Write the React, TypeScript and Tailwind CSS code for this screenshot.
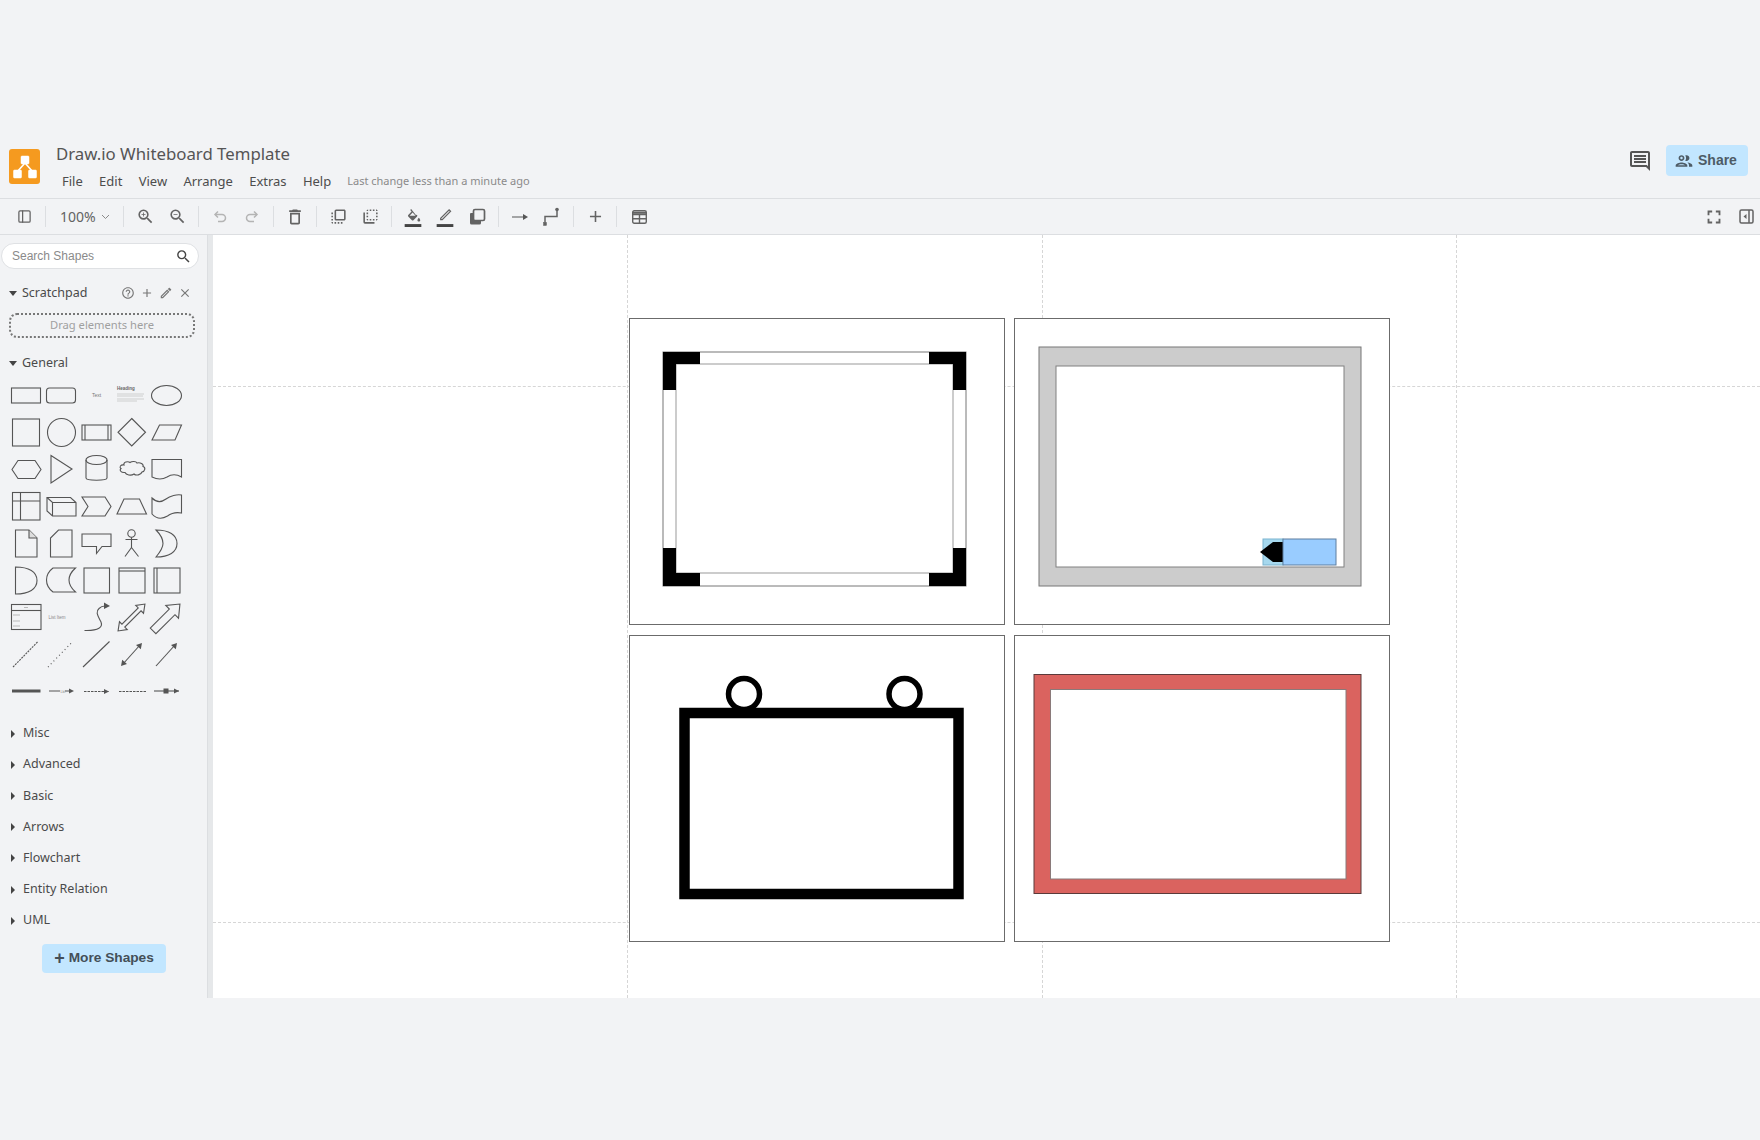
import type { ReactNode } from 'react';
import { PanelLeft } from 'lucide-react';
import {
  MdAdd,
  MdClose,
  MdFullscreen,
  MdHelpOutline,
  MdOutlineComment,
  MdOutlineDelete,
  MdOutlineEdit,
  MdOutlineFlipToBack,
  MdOutlineFlipToFront,
  MdOutlinePeople,
  MdOutlineZoomIn,
  MdOutlineZoomOut,
  MdSearch,
} from 'react-icons/md';

const uiFont = 'font-["Noto_Sans",sans-serif]';
const arialFont = 'font-["Liberation_Sans",Arial,sans-serif]';

function Sep() {
  return <div className="mx-[5px] h-[21px] w-px bg-[#dcdee1]" />;
}

function Btn({ children }: { children: ReactNode }) {
  return <div className="flex h-full w-[32px] items-center justify-center text-[#636363]">{children}</div>;
}

function BarIcon({ children }: { children: ReactNode }) {
  return (
    <svg width="20" height="20" viewBox="0 0 24 24" fill="#636363">
      {children}
      <rect x="2" y="20.500" width="20" height="3.500" fill="#444" />
    </svg>
  );
}

function Toolbar() {
  return (
    <div className="flex h-[37px] items-center border-y border-[#dcdee1] pl-[8px]">
      <Btn>
        <PanelLeft size={15} strokeWidth={2} />
      </Btn>
      <Sep />
      <div className={`flex w-[67px] items-center pl-[9px] text-[14px] text-[#636363] ${uiFont}`}>
        100%
        <svg className="ml-[5px]" width="9" height="6" viewBox="0 0 9 6" fill="none" stroke="#8a8a8a">
          <path d="M1 1l3.500 3.500L8 1" />
        </svg>
      </div>
      <Sep />
      <Btn>
        <MdOutlineZoomIn size={19} />
      </Btn>
      <Btn>
        <MdOutlineZoomOut size={19} />
      </Btn>
      <Sep />
      <Btn>
        <svg width="16" height="16" viewBox="0 0 16 16" fill="none" stroke="#b4b4b4" strokeWidth="1.500">
          <path d="M3 5.500h7a3.500 3.500 0 0 1 0 7H6" />
          <path d="M6 2.500l-3 3 3 3" />
        </svg>
      </Btn>
      <Btn>
        <svg width="16" height="16" viewBox="0 0 16 16" fill="none" stroke="#b4b4b4" strokeWidth="1.500">
          <path d="M13 5.500H6a3.500 3.500 0 0 0 0 7h4" />
          <path d="M10 2.500l3 3-3 3" />
        </svg>
      </Btn>
      <Sep />
      <Btn>
        <MdOutlineDelete size={20} />
      </Btn>
      <Sep />
      <Btn>
        <MdOutlineFlipToFront size={19} />
      </Btn>
      <Btn>
        <MdOutlineFlipToBack size={19} />
      </Btn>
      <Sep />
      <Btn>
        <BarIcon>
          <path d="M13.200 8.200 7.800 1.500 6.600 2.600l1.700 1.900-4 4.200c-.5.5-.5 1.200 0 1.700l4.400 4.400c.2.2.5.4.9.4s.6-.2.9-.4l4.400-4.400c.4-.5.4-1.200 0-1.700zM5.900 9.500 9.500 5.600l3.600 3.900H5.900zM17 12s-1.700 1.800-1.700 2.900c0 .9.8 1.600 1.700 1.600s1.700-.7 1.700-1.600C18.700 13.800 17 12 17 12z" transform="translate(2 1)" />
        </BarIcon>
      </Btn>
      <Btn>
        <BarIcon>
          <path d="M16.900 2.300 19.700 5.100 9 16H6.100v-2.900L16.900 2.300zm0 2.100L7.600 13.700v.8h.8l9.300-9.400-.8-.7z" />
        </BarIcon>
      </Btn>
      <Btn>
        <svg width="18" height="18" viewBox="0 0 18 18">
          <path d="M3 5h10v10a1.500 1.500 0 0 1-1.500 1.500h-8A1.500 1.500 0 0 1 2 15V6a1 1 0 0 1 1-1z" fill="#636363" />
          <rect x="5.500" y="1.500" width="11" height="11" rx="1.500" fill="#f2f3f5" stroke="#636363" strokeWidth="1.700" />
        </svg>
      </Btn>
      <Sep />
      <Btn>
        <svg width="16" height="10" viewBox="0 0 16 10" fill="#555">
          <path d="M0 4.500h12v1H0z" />
          <path d="M11 2l5 3-5 3z" />
        </svg>
      </Btn>
      <Btn>
        <svg width="18" height="20" viewBox="0 0 18 20" fill="none" stroke="#636363" strokeWidth="1.500">
          <path d="M2 16V9.500h12V3" />
          <rect x="0.500" y="15.500" width="3" height="3" fill="#636363" strokeWidth="0.500" />
          <circle cx="14" cy="2.500" r="1.800" fill="#636363" stroke="none" />
        </svg>
      </Btn>
      <Sep />
      <Btn>
        <MdAdd size={19} />
      </Btn>
      <Sep />
      <Btn>
        <svg className="ml-[2px]" width="15" height="14" viewBox="0 0 15 14" fill="none" stroke="#636363" strokeWidth="1.400">
          <rect x="0.700" y="0.700" width="13.600" height="12.600" rx="1.500" />
          <path d="M0.700 4.500h13.600M0.700 8.800h13.600M7.500 4.500v8.800" />
          <path d="M0.700 2.800h13.600" strokeWidth="2" />
        </svg>
      </Btn>
      <div className="-mr-[2px] ml-auto flex h-full items-center">
        <Btn>
          <MdFullscreen size={22} />
        </Btn>
        <Btn>
          <svg width="15" height="15" viewBox="0 0 15 15" fill="none" stroke="#636363" strokeWidth="1.500">
            <rect x="1" y="1" width="13" height="13" rx="1.500" />
            <path d="M10 1v13" />
            <path d="M7.500 5v5L4.500 7.500z" fill="#636363" stroke="none" />
          </svg>
        </Btn>
      </div>
    </div>
  );
}

function Header() {
  return (
    <div className="flex h-[58px] items-start pl-[9px] pr-[12px]">
      <div className="mt-[9px] flex h-[35px] w-[31px] shrink-0 items-center justify-center rounded-[3px] bg-[#f59a1f]">
        <svg width="26" height="24" viewBox="0 0 26 24" fill="#fff" stroke="#fff">
          <path d="M13 8 5 17M13 8l8 9" fill="none" strokeWidth="1.600" />
          <rect x="9" y="1" width="8" height="8" rx="1" strokeWidth="0.500" />
          <rect x="1.500" y="15" width="8" height="8" rx="1" strokeWidth="0.500" />
          <rect x="16.500" y="15" width="8" height="8" rx="1" strokeWidth="0.500" />
        </svg>
      </div>
      <div className={`ml-[16px] mt-[2px] ${uiFont}`}>
        <div className="text-[16.800px] leading-[24px] text-[#555]">Draw.io Whiteboard Template</div>
        <div className="mt-[6px] flex items-center pl-[6px] text-[13px] leading-[18px] text-[#4d4d4d]">
          <span>File</span>
          <span className="ml-[16.300px]">Edit</span>
          <span className="ml-[16.300px]">View</span>
          <span className="ml-[16.300px]">Arrange</span>
          <span className="ml-[16.300px]">Extras</span>
          <span className="ml-[16.300px]">Help</span>
          <span className="ml-[16px] text-[11px] text-[#8a8a8a]">Last change less than a minute ago</span>
        </div>
      </div>
      <div className="ml-auto mt-[5px] flex items-center">
        <MdOutlineComment size={24} className="mr-[14px] text-[#555]" />
        <div className={`flex h-[31px] w-[82px] items-center gap-[4px] rounded-[4px] bg-[#c2e6ff] pl-[8px] text-[14px] font-bold text-[#4d5b66] ${arialFont}`}>
          <MdOutlinePeople size={20} />
          Share
        </div>
      </div>
    </div>
  );
}

function SectionHead({ label, open }: { label: string; open?: boolean }) {
  return (
    <div className={`flex items-center pl-[9px] text-[12.500px] text-[#4a4a4a] ${uiFont}`}>
      {open ? (
        <svg width="8" height="5" viewBox="0 0 8 5" fill="#444">
          <path d="M0 0h8L4 5z" />
        </svg>
      ) : (
        <svg className="ml-[2px] mr-[3px]" width="4" height="8" viewBox="0 0 4 8" fill="#444">
          <path d="M0 0l4 4-4 4z" />
        </svg>
      )}
      <span className="ml-[5px]">{label}</span>
    </div>
  );
}

function Cell({ children }: { children?: ReactNode }) {
  return (
    <svg width="35" height="37" viewBox="0 0 35 37" fill="none" stroke="#555" strokeWidth="1.100">
      {children}
    </svg>
  );
}

const shapes: ReactNode[] = [
  <rect x="2.500" y="11" width="29" height="15" />,
  <rect x="2.500" y="11" width="29" height="15" rx="3" />,
  <text x="17.500" y="20" textAnchor="middle" fontSize="5" fill="#777" stroke="none" fontFamily="Liberation Sans">
    Text
  </text>,
  <>
    <text x="3" y="13" fontSize="4.500" fontWeight="bold" fill="#666" stroke="none" fontFamily="Liberation Sans">
      Heading
    </text>
    <path d="M3 17h27M3 19h26M3 22h27M3 24h20" stroke="#aaa" strokeWidth="0.500" />
  </>,
  <ellipse cx="17.500" cy="18.500" rx="15" ry="10" />,

  <rect x="3.500" y="5" width="27" height="27" />,
  <circle cx="17.500" cy="18.500" r="14" />,
  <>
    <rect x="3" y="11" width="29" height="15" />
    <path d="M6 11v15M29 11v15" />
  </>,
  <path d="M17.750 4.500 31.500 18.250 17.750 32 4 18.250z" />,
  <path d="M10.500 11H32.500L26 26H3z" />,

  <path d="M9 9.500H26L32 18.500 26 27.500H9L3 18.500z" />,
  <path d="M7 4.500 28 18 7 32z" />,
  <>
    <path d="M7 9v18c0 3 21 3 21 0V9" />
    <ellipse cx="17.500" cy="9" rx="10.500" ry="4.500" />
  </>,
  <path d="M10 14c-1-3 4-4 6-2.500 2-1.500 6-1.500 7 .5 3-1 7 1 6 3.500 3 1 2 5-1 5.500-1 3-6 4-8 2-3 2-8 1-9-1.500-4 .5-6-2.500-4-4-2-1.500-.5-4 3-3.500z" />,
  <path d="M3 8.500h29.500V26c-5-3-10-3-14.500 0-5 3-10 2.500-15 0z" />,

  <>
    <rect x="3.500" y="4.500" width="27.500" height="27.500" />
    <path d="M11.500 4.500v27.500M3.500 13h27.500" />
  </>,
  <>
    <path d="M3 9.500H26.500L32 14.500V28H8.500L3 23z" />
    <path d="M3 9.500l5.500 5H32M8.500 14.500V28" />
  </>,
  <path d="M3 9h23l6 9.500L26 28H3l6-9.500z" />,
  <path d="M10 11h15.500l7 15H3z" />,
  <path d="M3 10c5 5 10 4 14 1s11-5 15.500-4v18c-5-1-10 0-14 3-5 3-11 3-15.500-2z" />,

  <>
    <path d="M6.500 5H20l8 8v19H6.500z" />
    <path d="M20 5v8h8" fill="#ddd" />
  </>,
  <path d="M14.500 5H28v27H6.500V13z" />,
  <path d="M3 9h29v12.500H23L17.500 28.500v-7H3z" />,
  <>
    <circle cx="17.500" cy="8.500" r="3.700" />
    <path d="M17.500 12.200v10.300M11.500 14.500h12M17.500 22.500l-6.500 9M17.500 22.500l7 9" />
  </>,
  <path d="M7 5C20 5 28 10 28 18.500S20 32 7 32c5-6 7-10 7-13.500S12 10 7 5z" />,

  <path d="M6.500 5C20 5 28 10 28 18.500S20 32 6.500 32z" />,
  <path d="M9 6h22.500C27 10 25 14 25 18s2 8 6.500 12H9C5 27 2.500 22 2.500 18S5 9 9 6z" />,
  <rect x="5" y="6" width="25.500" height="25" />,
  <>
    <rect x="5" y="6" width="26" height="25" />
    <path d="M5 9h26" />
  </>,
  <>
    <rect x="5" y="6" width="26" height="25" />
    <path d="M8 6v25" />
  </>,

  <>
    <rect x="2.500" y="5.500" width="29.500" height="25" />
    <path d="M2.500 11.500h29.500" />
    <path d="M4 16h7M4 22h7M4 27h7" stroke="#aaa" strokeWidth="0.800" />
    <path d="M15 8.500h4" stroke="#aaa" strokeWidth="0.800" />
  </>,
  <text x="4.500" y="20" fontSize="4.500" fill="#888" stroke="none" fontFamily="Liberation Sans">
    List Item
  </text>,
  <>
    <path d="M5.500 31.500C20 32 24 28 22 23 19 17 16 13 20 9.500 22 7.500 25 7 26 7" />
    <path d="M25 3.500 31 7 25 10z" fill="#555" stroke="none" />
  </>,
  <path
    transform="rotate(-45 17.500 18.500)"
    d="M-1.500 18.500 6 13V16.500H29V13L36.500 18.500 29 24V20.500H6V24z"
  />,
  <path
    transform="rotate(-45 17.500 18.500)"
    d="M-1.500 14.500H25.500V9.500L36.500 18.500 25.500 27.500V22.500H-1.500z"
  />,

  <path d="M4 31 29 5.500" strokeDasharray="2 1" />,
  <path d="M4 31 28.700 5.500" strokeDasharray="1 3" />,
  <path d="M4 31 30.500 5.500" />,
  <>
    <path d="M9 28 26 9" />
    <path d="M28 7l-1.200 6.200-4.800-4.300zM7 30l1.200-6.200 4.800 4.300z" fill="#555" stroke="none" />
  </>,
  <>
    <path d="M7 30 26 9" />
    <path d="M28 7l-1.200 6.200-4.800-4.300z" fill="#555" stroke="none" />
  </>,

  <path d="M3 18h28.500" strokeWidth="3" stroke="#555" />,
  <>
    <path d="M5 18h11M21 18h5" />
    <text x="16.500" y="19.500" fontSize="3.500" fill="#888" stroke="none" fontFamily="Liberation Sans">
      Lbl
    </text>
    <path d="M25 15.500l5 2.500-5 2.500z" fill="#555" stroke="none" />
  </>,
  <>
    <path d="M5 18.500h25" strokeDasharray="2.500 1" />
    <path d="M25 16l5 2.500-5 2.500z" fill="#555" stroke="none" />
  </>,
  <path d="M5 18.500h27" strokeDasharray="2.500 1" />,
  <>
    <path d="M5 18h25" />
    <rect x="14.500" y="15.500" width="5" height="5" fill="#555" stroke="none" />
    <path d="M25 15.500l5 2.500-5 2.500z" fill="#555" stroke="none" />
  </>,
];

function Sidebar() {
  return (
    <div className="flex w-[213px] shrink-0">
      <div className="w-[207px]">
        <div className={`ml-[1px] mt-[8px] flex h-[26px] w-[198px] items-center justify-between rounded-full border border-[#dfe1e4] bg-white pl-[10px] pr-[6px] text-[12px] text-[#8a8a8a] ${arialFont}`}>
          Search Shapes
          <MdSearch size={17} className="text-[#444]" />
        </div>
        <div className="mt-[12px] flex h-[24px] items-center pr-[15px]">
          <SectionHead label="Scratchpad" open />
          <div className="ml-auto flex items-center gap-[5px] text-[#777]">
            <MdHelpOutline size={14} />
            <MdAdd size={14} />
            <MdOutlineEdit size={14} />
            <MdClose size={14} />
          </div>
        </div>
        <div className={`ml-[9px] mt-[8px] flex h-[25px] w-[186px] items-center justify-center rounded-[8px] border-2 border-dotted border-[#777] text-[11.200px] text-[#a0a0a0] ${uiFont}`}>
          Drag elements here
        </div>
        <div className="mt-[13px] flex h-[24px] items-center">
          <SectionHead label="General" open />
        </div>
        <div className="ml-[8.500px] mt-[1.500px] grid grid-cols-[repeat(5,35px)] auto-rows-[37px]">
          {shapes.map((shape, i) => (
            <Cell key={i}>{shape}</Cell>
          ))}
        </div>
        <div className="mt-[8.500px]">
          {['Misc', 'Advanced', 'Basic', 'Arrows', 'Flowchart', 'Entity Relation', 'UML'].map((label) => (
            <div key={label} className="flex h-[31.200px] items-center">
              <SectionHead label={label} />
            </div>
          ))}
        </div>
        <div className={`ml-[42px] mt-[7.500px] flex h-[29px] w-[124px] items-center justify-center rounded-[4px] bg-[#c2e6ff] text-[13.700px] font-bold text-[#444f58] ${arialFont}`}>
          <span className="mr-[4px] text-[18px] leading-none">+</span>More Shapes
        </div>
      </div>
      <div className="w-[6px] border-l border-[#dcdee1] bg-[#e6e8ea]" />
    </div>
  );
}

function Card({ children }: { children: ReactNode }) {
  return (
    <div className="border border-[#6b6b6b] bg-white">
      <svg className="block h-full w-full" viewBox="1 1 374 305" fill="none">
        {children}
      </svg>
    </div>
  );
}

function Canvas() {
  return (
    <div className="relative flex-1 bg-white pl-[416px] pt-[83px]">
      <div className="absolute bottom-0 left-[414px] top-0 border-l border-dashed border-[#d6d6d6]" />
      <div className="absolute bottom-0 left-[828.500px] top-0 border-l border-dashed border-[#d6d6d6]" />
      <div className="absolute bottom-0 left-[1243px] top-0 border-l border-dashed border-[#d6d6d6]" />
      <div className="absolute left-0 right-0 top-[151px] border-t border-dashed border-[#d6d6d6]" />
      <div className="absolute left-0 right-0 top-[687px] border-t border-dashed border-[#d6d6d6]" />
      <div className="relative grid grid-cols-[376px_376px] grid-rows-[307px_307px] gap-x-[9px] gap-y-[10px]">
        <Card>
          <rect x="34" y="34" width="303" height="234" fill="#fff" stroke="#777" />
          <rect x="47" y="46" width="277" height="209" fill="#fff" stroke="#999" />
          <path d="M34 34h37v12H47v26H34zM337 34h-37v12h24v26h13zM34 268h37v-13H47v-25H34zM337 268h-37v-13h24v-25h13z" fill="#000" />
        </Card>
        <Card>
          <rect x="25" y="29" width="322" height="239" fill="#ccc" stroke="#777" />
          <rect x="42" y="48" width="288" height="201" fill="#fff" stroke="#808080" />
          <rect x="249" y="221" width="20" height="26" fill="#a6d8ee" stroke="#7ab3cf" />
          <path d="M246 234l13-10h10v20h-10z" fill="#000" />
          <rect x="269" y="221" width="53" height="26" fill="#99ccff" stroke="#5f7f9f" />
        </Card>
        <Card>
          <circle cx="115" cy="59" r="15.500" fill="#fff" stroke="#000" strokeWidth="5.500" />
          <circle cx="275.500" cy="59" r="15.500" fill="#fff" stroke="#000" strokeWidth="5.500" />
          <rect x="55.500" y="78" width="274" height="181" fill="#fff" stroke="#000" strokeWidth="10.500" />
        </Card>
        <Card>
          <rect x="20" y="39.500" width="327" height="219" fill="#da635f" stroke="#5b3a3a" />
          <rect x="36.500" y="54.500" width="295.500" height="189.500" fill="#fff" stroke="#8a7a7a" />
        </Card>
      </div>
    </div>
  );
}

export default function App() {
  return (
    <div className="flex h-[1140px] w-[1760px] flex-col overflow-hidden bg-[#f2f3f5] pb-[142px] pt-[140px]">
      <Header />
      <Toolbar />
      <div className="flex min-h-0 flex-1 overflow-hidden">
        <Sidebar />
        <Canvas />
      </div>
    </div>
  );
}
